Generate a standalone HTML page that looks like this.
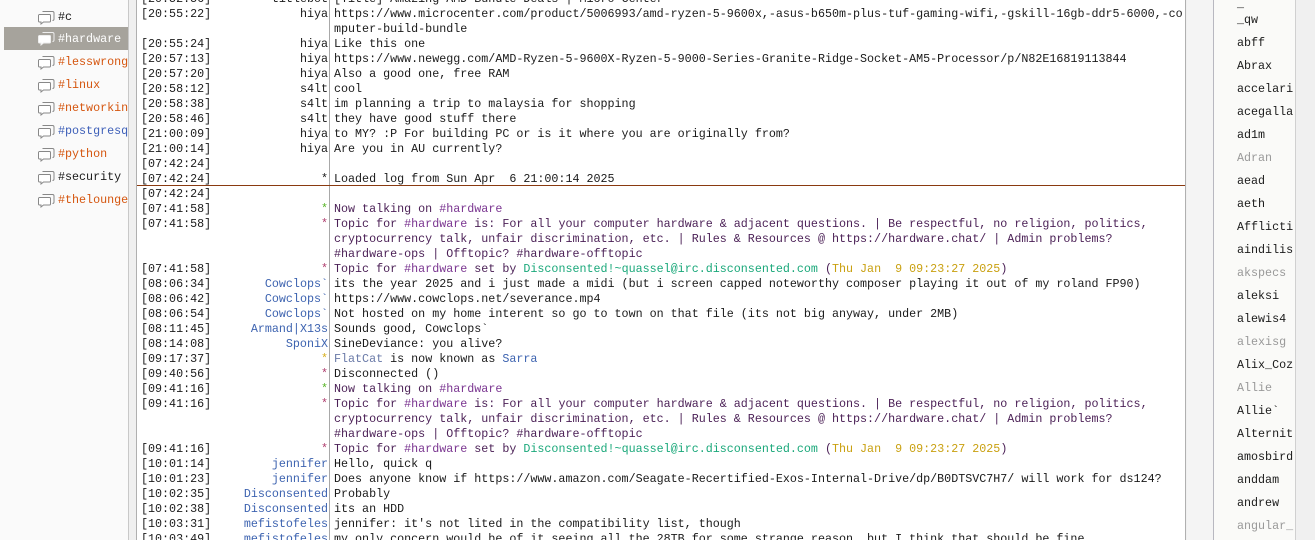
<!DOCTYPE html>
<html><head><meta charset="utf-8"><style>
*{margin:0;padding:0;box-sizing:border-box}
body{width:1315px;height:540px;overflow:hidden;background:#f0f0f0;font-family:"Liberation Mono",monospace;font-size:11.7px;color:#1a1a1a;position:relative}
#side{position:absolute;left:0;top:0;width:129px;height:540px;background:#fafafa;border-right:1px solid #c8c8c8}
.ch{position:absolute;left:4px;width:124px;height:23px;line-height:23px;padding-left:54px;white-space:nowrap;overflow:hidden}
.ch svg{position:absolute;left:34px;top:4px}
.sel{background:#a6a39c;color:#fff}
.o{color:#d5560f}.b{color:#3d5fb8}
#chat{position:absolute;left:136px;top:0;width:1050px;height:540px;background:#fff;border-left:1px solid #b0b0b0;border-right:1px solid #b0b0b0;overflow:hidden}
#rows{position:absolute;left:0;top:2px;width:1050px;height:540px}
#sep{position:absolute;left:192px;top:0;width:1px;height:540px;background:#a8a8a8}
.r{position:absolute;left:0;height:15px;line-height:15px;width:1050px;white-space:pre}
.t{position:absolute;left:4px}
.n{position:absolute;right:859px;text-align:right}
.m{position:absolute;left:197px}
.nb{color:#3d63b0}.g{color:#59b52a}.p{color:#b04070}.y{color:#d8b020}
.tp{color:#4a1f55}.hc{color:#7a3590}.gr{color:#1aa87a}.dt{color:#c9a010}.fc{color:#6a7aa8}
#marker{position:absolute;left:0;top:185px;width:1050px;height:1px;background:#8a3a10}
#gap{position:absolute;left:1187px;top:0;width:26px;height:540px;background:#f4f4f4}
#nl{position:absolute;left:1213px;top:0;width:83px;height:540px;background:#fafaf8;border-left:1px solid #b8b8c0;border-right:1px solid #d0d0d0}
.nk{position:absolute;left:23px;height:23px;line-height:23px;white-space:nowrap}
.gy{color:#999}
</style></head><body>
<div id="side">
<div class="ch" style="top:6px"><svg width="17" height="15" viewBox="0 0 17 15"><path d="M4.5 1.5h10a1.5 1.5 0 0 1 1.5 1.5v6a1.5 1.5 0 0 1-1.5 1.5" fill="none" stroke="#888"/><path d="M1.5 4.5h10a1 1 0 0 1 1 1v5.5a1 1 0 0 1-1 1h-6l-2.5 2v-2h-1.5a1 1 0 0 1-1-1v-5.5a1 1 0 0 1 1-1z" fill="#fff" stroke="#888"/></svg>#c</div>
<div class="ch sel" style="top:27px;line-height:25px"><svg width="17" height="15" viewBox="0 0 17 15"><path d="M4.5 1.5h10a1.5 1.5 0 0 1 1.5 1.5v6a1.5 1.5 0 0 1-1.5 1.5" fill="none" stroke="#eee"/><path d="M1.5 4.5h10a1 1 0 0 1 1 1v5.5a1 1 0 0 1-1 1h-6l-2.5 2v-2h-1.5a1 1 0 0 1-1-1v-5.5a1 1 0 0 1 1-1z" fill="#fff" stroke="#eee"/></svg>#hardware</div>
<div class="ch o" style="top:51px"><svg width="17" height="15" viewBox="0 0 17 15"><path d="M4.5 1.5h10a1.5 1.5 0 0 1 1.5 1.5v6a1.5 1.5 0 0 1-1.5 1.5" fill="none" stroke="#888"/><path d="M1.5 4.5h10a1 1 0 0 1 1 1v5.5a1 1 0 0 1-1 1h-6l-2.5 2v-2h-1.5a1 1 0 0 1-1-1v-5.5a1 1 0 0 1 1-1z" fill="#fff" stroke="#888"/></svg>#lesswrong</div>
<div class="ch o" style="top:74px"><svg width="17" height="15" viewBox="0 0 17 15"><path d="M4.5 1.5h10a1.5 1.5 0 0 1 1.5 1.5v6a1.5 1.5 0 0 1-1.5 1.5" fill="none" stroke="#888"/><path d="M1.5 4.5h10a1 1 0 0 1 1 1v5.5a1 1 0 0 1-1 1h-6l-2.5 2v-2h-1.5a1 1 0 0 1-1-1v-5.5a1 1 0 0 1 1-1z" fill="#fff" stroke="#888"/></svg>#linux</div>
<div class="ch o" style="top:97px"><svg width="17" height="15" viewBox="0 0 17 15"><path d="M4.5 1.5h10a1.5 1.5 0 0 1 1.5 1.5v6a1.5 1.5 0 0 1-1.5 1.5" fill="none" stroke="#888"/><path d="M1.5 4.5h10a1 1 0 0 1 1 1v5.5a1 1 0 0 1-1 1h-6l-2.5 2v-2h-1.5a1 1 0 0 1-1-1v-5.5a1 1 0 0 1 1-1z" fill="#fff" stroke="#888"/></svg>#networkin</div>
<div class="ch b" style="top:120px"><svg width="17" height="15" viewBox="0 0 17 15"><path d="M4.5 1.5h10a1.5 1.5 0 0 1 1.5 1.5v6a1.5 1.5 0 0 1-1.5 1.5" fill="none" stroke="#888"/><path d="M1.5 4.5h10a1 1 0 0 1 1 1v5.5a1 1 0 0 1-1 1h-6l-2.5 2v-2h-1.5a1 1 0 0 1-1-1v-5.5a1 1 0 0 1 1-1z" fill="#fff" stroke="#888"/></svg>#postgresq</div>
<div class="ch o" style="top:143px"><svg width="17" height="15" viewBox="0 0 17 15"><path d="M4.5 1.5h10a1.5 1.5 0 0 1 1.5 1.5v6a1.5 1.5 0 0 1-1.5 1.5" fill="none" stroke="#888"/><path d="M1.5 4.5h10a1 1 0 0 1 1 1v5.5a1 1 0 0 1-1 1h-6l-2.5 2v-2h-1.5a1 1 0 0 1-1-1v-5.5a1 1 0 0 1 1-1z" fill="#fff" stroke="#888"/></svg>#python</div>
<div class="ch" style="top:166px"><svg width="17" height="15" viewBox="0 0 17 15"><path d="M4.5 1.5h10a1.5 1.5 0 0 1 1.5 1.5v6a1.5 1.5 0 0 1-1.5 1.5" fill="none" stroke="#888"/><path d="M1.5 4.5h10a1 1 0 0 1 1 1v5.5a1 1 0 0 1-1 1h-6l-2.5 2v-2h-1.5a1 1 0 0 1-1-1v-5.5a1 1 0 0 1 1-1z" fill="#fff" stroke="#888"/></svg>#security</div>
<div class="ch o" style="top:189px"><svg width="17" height="15" viewBox="0 0 17 15"><path d="M4.5 1.5h10a1.5 1.5 0 0 1 1.5 1.5v6a1.5 1.5 0 0 1-1.5 1.5" fill="none" stroke="#888"/><path d="M1.5 4.5h10a1 1 0 0 1 1 1v5.5a1 1 0 0 1-1 1h-6l-2.5 2v-2h-1.5a1 1 0 0 1-1-1v-5.5a1 1 0 0 1 1-1z" fill="#fff" stroke="#888"/></svg>#thelounge</div>
</div>

<div id="chat">
<div id="sep"></div>
<div id="marker"></div>
<div id="rows">
<div class="r" style="top:-10px"><span class="t">[20:52:56]</span><span class="n">titlebot</span><span class="m">[Title] Amazing AMD Bundle Deals | Micro Center</span></div>
<div class="r" style="top:5px"><span class="t">[20:55:22]</span><span class="n">hiya</span><span class="m">https://www.microcenter.com/product/5006993/amd-ryzen-5-9600x,-asus-b650m-plus-tuf-gaming-wifi,-gskill-16gb-ddr5-6000,-co</span></div>
<div class="r" style="top:20px"><span class="m">mputer-build-bundle</span></div>
<div class="r" style="top:35px"><span class="t">[20:55:24]</span><span class="n">hiya</span><span class="m">Like this one</span></div>
<div class="r" style="top:50px"><span class="t">[20:57:13]</span><span class="n">hiya</span><span class="m">https://www.newegg.com/AMD-Ryzen-5-9600X-Ryzen-5-9000-Series-Granite-Ridge-Socket-AM5-Processor/p/N82E16819113844</span></div>
<div class="r" style="top:65px"><span class="t">[20:57:20]</span><span class="n">hiya</span><span class="m">Also a good one, free RAM</span></div>
<div class="r" style="top:80px"><span class="t">[20:58:12]</span><span class="n">s4lt</span><span class="m">cool</span></div>
<div class="r" style="top:95px"><span class="t">[20:58:38]</span><span class="n">s4lt</span><span class="m">im planning a trip to malaysia for shopping</span></div>
<div class="r" style="top:110px"><span class="t">[20:58:46]</span><span class="n">s4lt</span><span class="m">they have good stuff there</span></div>
<div class="r" style="top:125px"><span class="t">[21:00:09]</span><span class="n">hiya</span><span class="m">to MY? :P For building PC or is it where you are originally from?</span></div>
<div class="r" style="top:140px"><span class="t">[21:00:14]</span><span class="n">hiya</span><span class="m">Are you in AU currently?</span></div>
<div class="r" style="top:155px"><span class="t">[07:42:24]</span></div>
<div class="r" style="top:170px"><span class="t">[07:42:24]</span><span class="n">*</span><span class="m">Loaded log from Sun Apr  6 21:00:14 2025</span></div>
<div class="r" style="top:185px"><span class="t">[07:42:24]</span></div>
<div class="r" style="top:200px"><span class="t">[07:41:58]</span><span class="n g">*</span><span class="m tp">Now talking on <span class="hc">#hardware</span></span></div>
<div class="r" style="top:215px"><span class="t">[07:41:58]</span><span class="n p">*</span><span class="m tp">Topic for <span class="hc">#hardware</span> is: For all your computer hardware &amp; adjacent questions. | Be respectful, no religion, politics,</span></div>
<div class="r" style="top:230px"><span class="m tp">cryptocurrency talk, unfair discrimination, etc. | Rules &amp; Resources @ https://hardware.chat/ | Admin problems?</span></div>
<div class="r" style="top:245px"><span class="m tp">#hardware-ops | Offtopic? #hardware-offtopic</span></div>
<div class="r" style="top:260px"><span class="t">[07:41:58]</span><span class="n p">*</span><span class="m tp">Topic for <span class="hc">#hardware</span> set by <span class="gr">Disconsented!~quassel@irc.disconsented.com</span> (<span class="dt">Thu Jan  9 09:23:27 2025</span>)</span></div>
<div class="r" style="top:275px"><span class="t">[08:06:34]</span><span class="n nb">Cowclops`</span><span class="m">its the year 2025 and i just made a midi (but i screen capped noteworthy composer playing it out of my roland FP90)</span></div>
<div class="r" style="top:290px"><span class="t">[08:06:42]</span><span class="n nb">Cowclops`</span><span class="m">https://www.cowclops.net/severance.mp4</span></div>
<div class="r" style="top:305px"><span class="t">[08:06:54]</span><span class="n nb">Cowclops`</span><span class="m">Not hosted on my home interent so go to town on that file (its not big anyway, under 2MB)</span></div>
<div class="r" style="top:320px"><span class="t">[08:11:45]</span><span class="n nb">Armand|X13s</span><span class="m">Sounds good, Cowclops`</span></div>
<div class="r" style="top:335px"><span class="t">[08:14:08]</span><span class="n nb">SponiX</span><span class="m">SineDeviance: you alive?</span></div>
<div class="r" style="top:350px"><span class="t">[09:17:37]</span><span class="n y">*</span><span class="m"><span class="fc">FlatCat</span> is now known as <span class="nb">Sarra</span></span></div>
<div class="r" style="top:365px"><span class="t">[09:40:56]</span><span class="n p">*</span><span class="m">Disconnected ()</span></div>
<div class="r" style="top:380px"><span class="t">[09:41:16]</span><span class="n g">*</span><span class="m tp">Now talking on <span class="hc">#hardware</span></span></div>
<div class="r" style="top:395px"><span class="t">[09:41:16]</span><span class="n p">*</span><span class="m tp">Topic for <span class="hc">#hardware</span> is: For all your computer hardware &amp; adjacent questions. | Be respectful, no religion, politics,</span></div>
<div class="r" style="top:410px"><span class="m tp">cryptocurrency talk, unfair discrimination, etc. | Rules &amp; Resources @ https://hardware.chat/ | Admin problems?</span></div>
<div class="r" style="top:425px"><span class="m tp">#hardware-ops | Offtopic? #hardware-offtopic</span></div>
<div class="r" style="top:440px"><span class="t">[09:41:16]</span><span class="n p">*</span><span class="m tp">Topic for <span class="hc">#hardware</span> set by <span class="gr">Disconsented!~quassel@irc.disconsented.com</span> (<span class="dt">Thu Jan  9 09:23:27 2025</span>)</span></div>
<div class="r" style="top:455px"><span class="t">[10:01:14]</span><span class="n nb">jennifer</span><span class="m">Hello, quick q</span></div>
<div class="r" style="top:470px"><span class="t">[10:01:23]</span><span class="n nb">jennifer</span><span class="m">Does anyone know if https://www.amazon.com/Seagate-Recertified-Exos-Internal-Drive/dp/B0DTSVC7H7/ will work for ds124?</span></div>
<div class="r" style="top:485px"><span class="t">[10:02:35]</span><span class="n nb">Disconsented</span><span class="m">Probably</span></div>
<div class="r" style="top:500px"><span class="t">[10:02:38]</span><span class="n nb">Disconsented</span><span class="m">its an HDD</span></div>
<div class="r" style="top:515px"><span class="t">[10:03:31]</span><span class="n nb">mefistofeles</span><span class="m">jennifer: it's not lited in the compatibility list, though</span></div>
<div class="r" style="top:530px"><span class="t">[10:03:49]</span><span class="n nb">mefistofeles</span><span class="m">my only concern would be of it seeing all the 28TB for some strange reason, but I think that should be fine</span></div>
</div>
</div>

<div id="gap"></div>
<div id="nl">
<div class="nk" style="top:-7px">_</div>
<div class="nk" style="top:9px">_qw</div>
<div class="nk" style="top:32px">abff</div>
<div class="nk" style="top:55px">Abrax</div>
<div class="nk" style="top:78px">accelari</div>
<div class="nk" style="top:101px">acegalla</div>
<div class="nk" style="top:124px">ad1m</div>
<div class="nk gy" style="top:147px">Adran</div>
<div class="nk" style="top:170px">aead</div>
<div class="nk" style="top:193px">aeth</div>
<div class="nk" style="top:216px">Afflicti</div>
<div class="nk" style="top:239px">aindilis</div>
<div class="nk gy" style="top:262px">akspecs</div>
<div class="nk" style="top:285px">aleksi</div>
<div class="nk" style="top:308px">alewis4</div>
<div class="nk gy" style="top:331px">alexisg</div>
<div class="nk" style="top:354px">Alix_Coz</div>
<div class="nk gy" style="top:377px">Allie</div>
<div class="nk" style="top:400px">Allie`</div>
<div class="nk" style="top:423px">Alternit</div>
<div class="nk" style="top:446px">amosbird</div>
<div class="nk" style="top:469px">anddam</div>
<div class="nk" style="top:492px">andrew</div>
<div class="nk gy" style="top:515px">angular_</div>
</div>
</body></html>
